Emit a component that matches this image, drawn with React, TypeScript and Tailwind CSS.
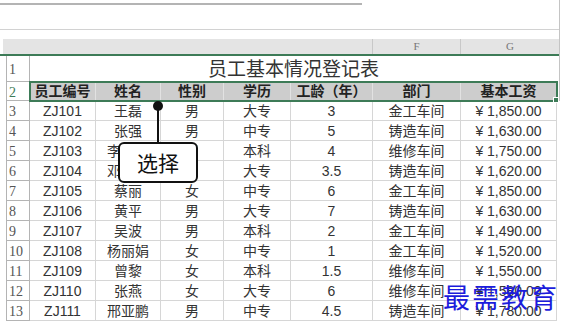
import React from 'react';

// column widths, A..G
const widths = ['w-[66px]', 'w-[65px]', 'w-[63px]', 'w-[67px]', 'w-[82px]', 'w-[88px]', 'w-[96px]'];

const headers = ['员工编号', '姓名', '性别', '学历', '工龄（年）', '部门', '基本工资'];

const rows: string[][] = [
  ['ZJ101', '王磊', '男', '大专', '3', '金工车间', '¥ 1,850.00'],
  ['ZJ102', '张强', '男', '中专', '5', '铸造车间', '¥ 1,630.00'],
  ['ZJ103', '李晓明', '男', '本科', '4', '维修车间', '¥ 1,750.00'],
  ['ZJ104', '邓小林', '男', '大专', '3.5', '铸造车间', '¥ 1,620.00'],
  ['ZJ105', '蔡丽', '女', '中专', '6', '金工车间', '¥ 1,850.00'],
  ['ZJ106', '黄平', '男', '大专', '7', '铸造车间', '¥ 1,630.00'],
  ['ZJ107', '吴波', '男', '本科', '2', '金工车间', '¥ 1,490.00'],
  ['ZJ108', '杨丽娟', '女', '中专', '1', '金工车间', '¥ 1,520.00'],
  ['ZJ109', '曾黎', '女', '本科', '1.5', '维修车间', '¥ 1,550.00'],
  ['ZJ110', '张燕', '女', '大专', '6', '维修车间', '¥ 1,580.00'],
  ['ZJ111', '邢亚鹏', '男', '中专', '4.5', '铸造车间', '¥ 1,780.00'],
];

const RowNum: React.FC<{ n: number; green?: boolean; bottom?: boolean }> = ({ n, green, bottom }) => (
  <div
    className={`flex w-[23px] shrink-0 border-r border-b border-[#b4b4b4] pl-[2px] font-['Liberation_Serif',serif] text-[14px] ${
      bottom ? 'items-end pb-[1px]' : 'items-center pt-[2px]'
    } ${green ? 'text-[#3d7b57]' : 'text-[#555]'}`}
  >
    {n}
  </div>
);

export default function App() {
  return (
    <div className="relative h-[329px] w-[565px] overflow-hidden bg-white font-['Liberation_Sans','Noto_Sans_CJK_SC',sans-serif] text-[#333]">
      {/* sheet chrome: top bars, column letters, title and header rows */}
      <div className="w-[560px] border-r border-[#c4c4c4]">
        <div className="h-[30px] border-b border-[#d2d2d2] pt-[3px]">
          <div className="h-[2px] w-[362px] bg-[#b4b4b4]" />
        </div>
        <div className="h-[9px]" />
        <div className="ml-[3px] flex h-[15px] bg-[#e4e4e4] font-['Liberation_Serif',serif] text-[11px] leading-[15px] text-[#777]">
          <div className="w-[369px]" />
          <div className="w-[88px] border-l border-[#c8c8c8] text-center">F</div>
          <div className="flex-1 border-l border-[#c8c8c8] text-center">G</div>
        </div>
        <div className="h-[2px] bg-[#3d7b57]" />

        {/* row 1: merged title */}
        <div className="ml-[6px] flex h-[26px] border-l border-[#b4b4b4]">
          <RowNum n={1} bottom />
          <div className="flex w-[527px] items-center justify-center pt-[2px] text-[19px] text-[#333]">
            员工基本情况登记表
          </div>
        </div>

        {/* row 2: header */}
        <div className="relative ml-[6px] flex h-[19px] border-l border-[#b4b4b4]">
          <RowNum n={2} green />
          <div className="flex outline-2 outline-offset-[-1px] outline-[#3d7b57]">
            {headers.map((h, i) => (
              <div
                key={h}
                className={`${widths[i]} flex items-center justify-center border-r border-[#e2e2e2] bg-[#cdcdcd] text-[14px] font-bold text-[#222]`}
              >
                {h}
              </div>
            ))}
          </div>
          <div className="absolute left-[546px] top-[15px] h-[6px] w-[6px] border border-white bg-[#3d7b57]" />
        </div>
      </div>

      {/* data rows */}
      <div className="ml-[6px] w-[551px] border-l border-[#b4b4b4]">
        {rows.map((r, ri) => (
          <div key={r[0]} className="flex h-[20px]">
            <RowNum n={ri + 3} />
            {r.map((c, ci) => (
              <div
                key={ci}
                className={`${widths[ci]} flex items-center justify-center border-r border-b border-[#d6d6d6] pt-[1px] text-[14px]`}
              >
                {c}
              </div>
            ))}
          </div>
        ))}
      </div>

      {/* callout */}
      <div className="absolute left-[153px] top-[101px] h-[10px] w-[10px] rounded-full bg-[#111]" />
      <div className="absolute left-[157px] top-[106px] h-[38px] w-[2px] bg-[#111]" />
      <div className="absolute left-[118px] top-[142px] flex h-[41px] w-[80px] items-center justify-center rounded-[6px] border-2 border-[#111] bg-white font-['Noto_Sans_CJK_SC',sans-serif] text-[21px] text-[#111]">
        选择
      </div>

      {/* watermark */}
      <div className="absolute left-[443px] top-[280px] font-['Noto_Sans_CJK_SC',sans-serif] text-[27px] leading-[34px] tracking-[2px] text-[#1c1cdc]">
        最需教育
      </div>
    </div>
  );
}
